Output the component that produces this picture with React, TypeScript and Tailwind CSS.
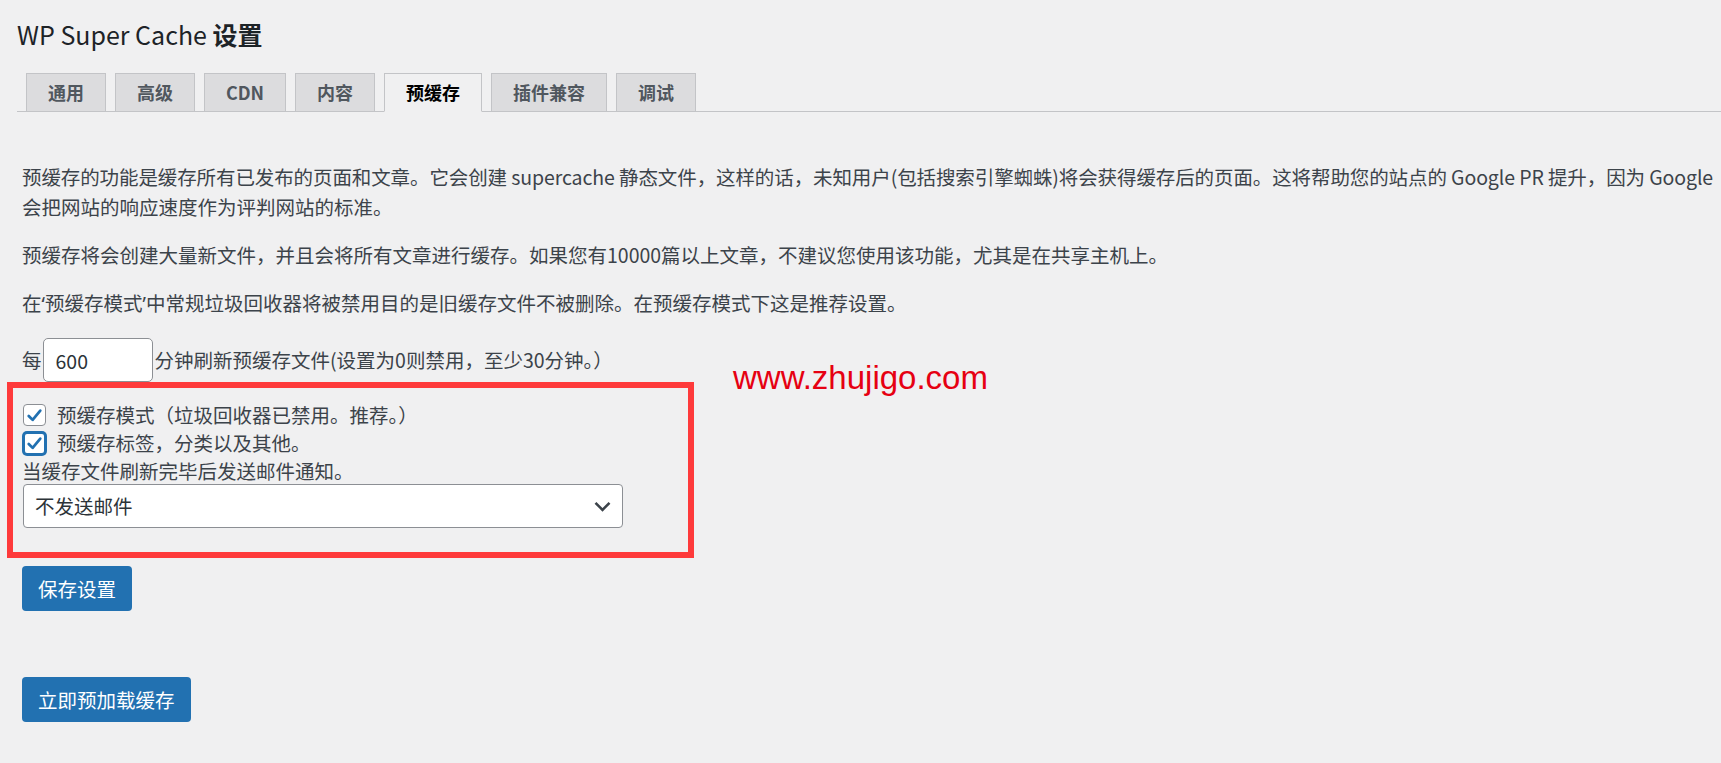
import React from "react";

const tabs = [
  { label: "通用", cls: "w-[80px] font-bold" },
  { label: "高级", cls: "w-[80px] font-bold" },
  { label: "CDN", cls: "w-[82px] font-semibold" },
  { label: "内容", cls: "w-[80px] font-bold" },
  { label: "预缓存", cls: "w-[98px] font-bold", active: true },
  { label: "插件兼容", cls: "w-[116px] font-bold" },
  { label: "调试", cls: "w-[80px] font-bold" },
];

// 勾选框
const CheckBox = ({ focused }: { focused?: boolean }) => (
  <span
    className={`ml-[1px] flex items-center justify-center rounded-[4px] bg-white ${
      focused
        ? "h-[23px] w-[23px] border-2 border-[#2271b1] shadow-[0_0_0_1px_#2271b1]"
        : "h-[22px] w-[23px] border border-[#8c8f94]"
    }`}
  >
    <svg width="17" height="17" viewBox="0 0 20 20" fill="none">
      <path d="M3.2 10.5 L7.8 15.2 L16.8 4.2" stroke="#2271b1" strokeWidth="3.2" strokeLinecap="round" strokeLinejoin="round" />
    </svg>
  </span>
);

const App = () => {
  return (
    <div className="relative min-h-[763px] w-full bg-[#f0f0f1] pl-[17px] pt-[18px] font-['Noto_Sans_CJK_SC',sans-serif] text-[#3c434a]">
      <h1 className="text-[25px] leading-[32px] text-[#1d2327]">
        WP Super Cache <span className="font-bold">设置</span>
      </h1>

      {/* 标签页 */}
      <nav className="mt-[23px] flex border-b border-[#c3c4c7]">
        {tabs.map((t) => (
          <div
            key={t.label}
            className={`-mb-px ml-[9px] h-[39px] border border-[#c3c4c7] text-center text-[18px] leading-[37px] ${t.cls} ${
              t.active ? "border-b-[#f0f0f1] bg-[#f0f0f1] text-black" : "bg-[#dcdcde] text-[#50575e]"
            }`}
          >
            {t.label}
          </div>
        ))}
      </nav>

      <div className="pl-[5px] text-[19.5px]">
        <p className="mt-[50px] leading-[30px]">
          <span className="block whitespace-nowrap tracking-[-0.1px]">
            预缓存的功能是缓存所有已发布的页面和文章。它会创建 supercache 静态文件，这样的话，未知用户(包括搜索引擎蜘蛛)将会获得缓存后的页面。这将帮助您的站点的 Google PR 提升，因为 Google
          </span>
          <span className="block">会把网站的响应速度作为评判网站的标准。</span>
        </p>
        <p className="mt-[18px] leading-[30px]">
          预缓存将会创建大量新文件，并且会将所有文章进行缓存。如果您有10000篇以上文章，不建议您使用该功能，尤其是在共享主机上。
        </p>
        <p className="mt-[18px] leading-[30px]">
          在<span className="font-['Noto_Sans',sans-serif]">‘</span>预缓存模式<span className="font-['Noto_Sans',sans-serif]">’</span>中常规垃圾回收器将被禁用目的是旧缓存文件不被删除。在预缓存模式下这是推荐设置。
        </p>

        <div className="mt-[19px] flex h-[44px] items-center">
          <span>每</span>
          <input
            type="text"
            defaultValue="600"
            className="ml-[1px] mr-[2px] h-[44px] w-[110px] rounded-[5px] border border-[#8c8f94] bg-white px-[12px] text-[19.5px] text-[#2c3338] outline-none"
          />
          <span>分钟刷新预缓存文件(设置为0则禁用，至少30分钟。）</span>
        </div>

        {/* 红框标注 */}
        <div className="ml-[-15px] w-[687px] border-[6px] border-[#fe3a3b] pb-[24px] pl-[9px] pt-[13px]">
          <label className="flex h-[28px] items-center">
            <CheckBox />
            <span className="ml-[11px]">预缓存模式（垃圾回收器已禁用。推荐。）</span>
          </label>
          <label className="flex h-[28px] items-center">
            <CheckBox focused />
            <span className="ml-[11px]">预缓存标签，分类以及其他。</span>
          </label>
          <div className="h-[27px] leading-[27px]">当缓存文件刷新完毕后发送邮件通知。</div>
          <div className="ml-[1px] flex h-[44px] w-[600px] items-center justify-between rounded-[4px] border border-[#8c8f94] bg-white pl-[11px] pr-[11px] text-[#2c3338]">
            <span>不发送邮件</span>
            <svg width="17" height="11" viewBox="0 0 17 11" fill="none">
              <path d="M1.5 1.8 L8.5 8.8 L15.5 1.8" stroke="#3c434a" strokeWidth="2.6" />
            </svg>
          </div>
        </div>

        <button className="mt-[8px] block h-[45px] rounded-[4px] bg-[#2271b1] px-[16px] text-[19.5px] text-white">
          保存设置
        </button>
        <button className="mt-[66px] block h-[45px] rounded-[4px] bg-[#2271b1] px-[16px] text-[19.5px] text-white">
          立即预加载缓存
        </button>
      </div>

      {/* 水印 */}
      <div className="absolute left-[733px] top-[362px] font-['Liberation_Sans',sans-serif] text-[33px] leading-[32px] text-[#e60012]">
        www.zhujigo.com
      </div>
    </div>
  );
};

export default App;
